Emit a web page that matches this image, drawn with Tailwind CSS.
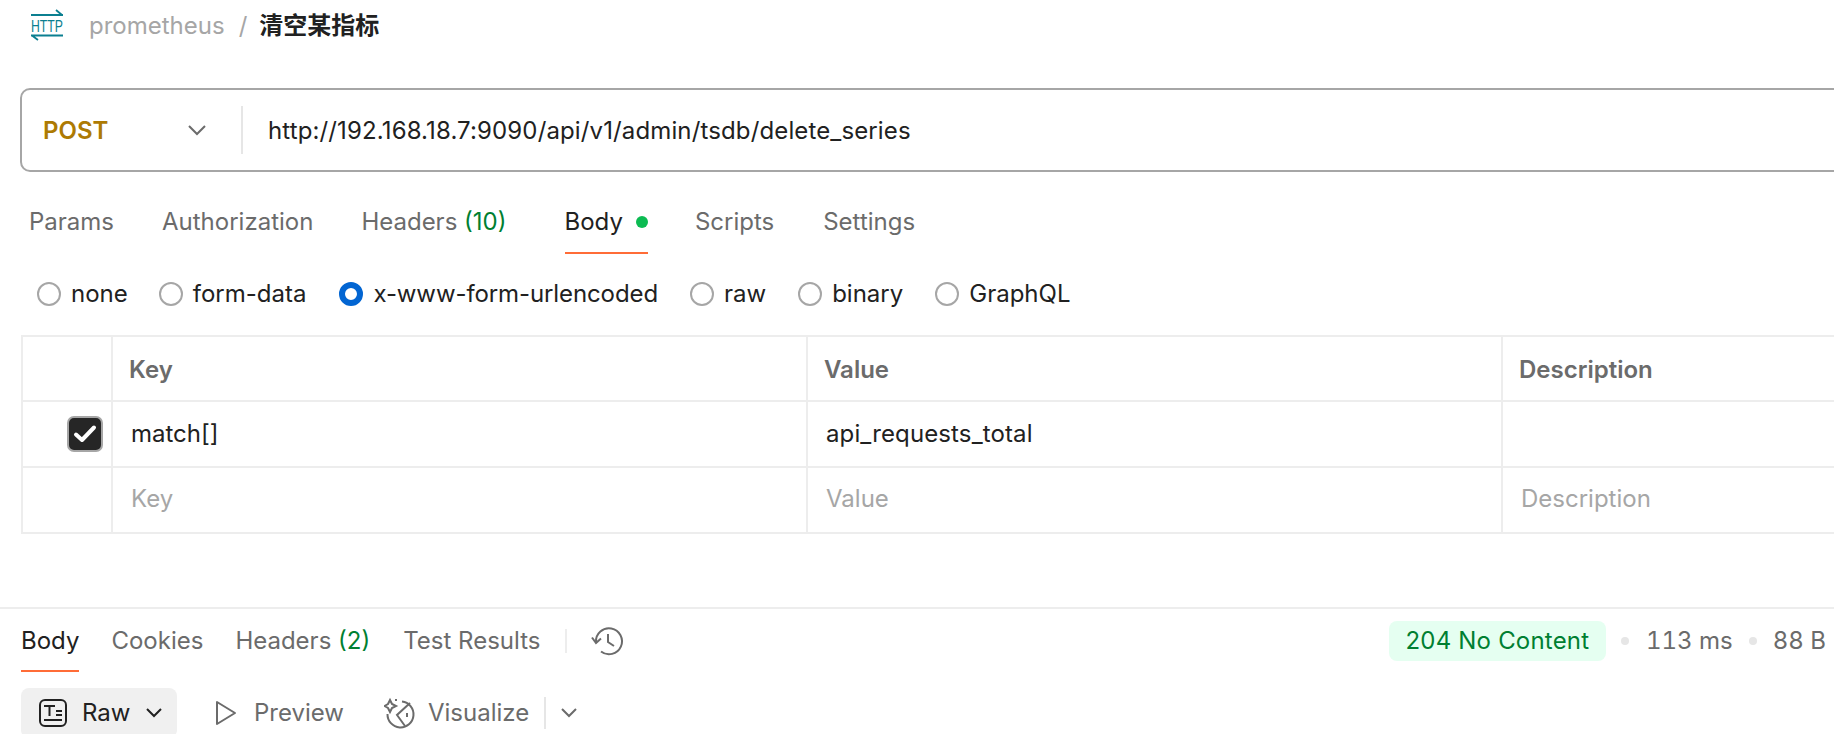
<!DOCTYPE html>
<html lang="zh">
<head>
<meta charset="utf-8">
<script src="https://cdn.jsdelivr.net/npm/@tailwindcss/browser@4"></script>
<title>清空某指标</title>
</head>
<body class="w-[1834px] h-[734px] overflow-hidden bg-white text-[24px] leading-[32px] text-[#212121] font-['Inter','Noto_Sans_CJK_SC',sans-serif]">
<div class="flex items-center h-[52px] pl-[30px]">
  <svg class="w-[34px] h-[34px] mr-[25px] overflow-visible" viewBox="0 0 34 34" fill="none" stroke="#0b7f90" stroke-width="1.8">
    <path d="M1 6H33M26 1L32 6M1 26.5H33M2 26.5L8 31"/>
    <text x="1" y="23" font-family="'Liberation Sans',sans-serif" font-size="17" fill="#0b7f90" stroke="none" textLength="32" lengthAdjust="spacingAndGlyphs">HTTP</text>
  </svg>
  <span class="text-[#a6a6a6]">prometheus</span>
  <span class="text-[#a6a6a6] ml-[14px] mr-[12px]">/</span>
  <span class="font-bold">清空某指标</span>
</div>

<div class="ml-[20px] mt-[36px] w-[1830px] h-[84px] flex items-center border-2 border-[#a6a6a6] rounded-[10px]">
  <span class="ml-[21px] w-[144px] mt-[2px] font-semibold text-[#ad7a03]">POST</span>
  <svg class="w-[20px] h-[12px] mr-[34px]" viewBox="0 0 20 12" fill="none" stroke="#6b6b6b" stroke-width="2"><path d="M2 2L10 10L18 2"/></svg>
  <span class="w-[2px] h-[48px] bg-[#e6e6e6]"></span>
  <span class="ml-[25px] mt-[1px] tracking-[0.13px]">http://192.168.18.7:9090/api/v1/admin/tsdb/delete_series</span>
</div>

<div class="flex h-[82px] ml-[29px] text-[#6b6b6b]">
  <div class="mr-[48px] pt-[34px]">Params</div>
  <div class="mr-[48px] pt-[34px]">Authorization</div>
  <div class="mr-[58px] pt-[34px]">Headers <span class="text-[#007f31]">(10)</span></div>
  <div class="mr-[47px] pt-[34px] h-[82px] border-b-2 border-[#ff6c37] text-[#212121] flex items-start">Body<span class="w-[12px] h-[12px] rounded-full bg-[#0cbb52] ml-[13px] mt-[10px]"></span></div>
  <div class="mr-[49px] pt-[34px]">Scripts</div>
  <div class="pt-[34px]">Settings</div>
</div>

<div class="flex items-center h-[48px] mt-[16px] ml-[37px]">
  <span class="w-[24px] h-[24px] rounded-full border-2 border-[#a6a6a6] mr-[10px]"></span><span class="mr-[31px]">none</span>
  <span class="w-[24px] h-[24px] rounded-full border-2 border-[#a6a6a6] mr-[10px]"></span><span class="mr-[33px]">form-data</span>
  <span class="w-[24px] h-[24px] rounded-full border-[6px] border-[#0265d2] mr-[10px]"></span><span class="mr-[32px] tracking-[-0.1px]">x-www-form-urlencoded</span>
  <span class="w-[24px] h-[24px] rounded-full border-2 border-[#a6a6a6] mr-[10px]"></span><span class="mr-[32px]">raw</span>
  <span class="w-[24px] h-[24px] rounded-full border-2 border-[#a6a6a6] mr-[10px]"></span><span class="mr-[32px]">binary</span>
  <span class="w-[24px] h-[24px] rounded-full border-2 border-[#a6a6a6] mr-[10px]"></span><span>GraphQL</span>
</div>

<div class="ml-[21px] mt-[17px] w-[1813px] border-2 border-r-0 border-[#ededed] grid grid-cols-[90px_695px_695px_1fr] grid-rows-[65px_66px_64px]">
  <div class="border-r-2 border-b-2 border-[#ededed]"></div>
  <div class="border-r-2 border-b-2 border-[#ededed] pl-[16px] pt-[2px] flex items-center font-semibold text-[#6b6b6b]">Key</div>
  <div class="border-r-2 border-b-2 border-[#ededed] pl-[16px] pt-[2px] flex items-center font-semibold text-[#6b6b6b]">Value</div>
  <div class="border-b-2 border-[#ededed] pl-[16px] pt-[2px] flex items-center font-semibold text-[#6b6b6b]">Description</div>

  <div class="border-r-2 border-b-2 border-[#ededed] flex items-center justify-end pr-[8px]">
    <span class="w-[36px] h-[36px] rounded-[7px] bg-[#262626] border-2 border-[#a6a6a6] flex items-center justify-center">
      <svg class="w-[24px] h-[20px]" viewBox="0 0 24 20" fill="none" stroke="#fff" stroke-width="4" stroke-linecap="round" stroke-linejoin="round"><path d="M3 10.5L9 16L21 3.5"/></svg>
    </span>
  </div>
  <div class="border-r-2 border-b-2 border-[#ededed] pl-[18px] flex items-center">match[]</div>
  <div class="border-r-2 border-b-2 border-[#ededed] pl-[18px] flex items-center tracking-[0.12px]">api_requests_total</div>
  <div class="border-b-2 border-[#ededed]"></div>

  <div class="border-r-2 border-[#ededed]"></div>
  <div class="border-r-2 border-[#ededed] pl-[18px] pb-[2px] flex items-center text-[#a6a6a6]">Key</div>
  <div class="border-r-2 border-[#ededed] pl-[18px] pb-[2px] flex items-center text-[#a6a6a6]">Value</div>
  <div class="pl-[18px] pb-[2px] flex items-center text-[#a6a6a6]">Description</div>
</div>

<div class="mt-[73px] border-t-2 border-[#ededed] flex justify-between h-[65px] pl-[21px]">
  <div class="flex text-[#6b6b6b]">
    <div class="mr-[32px] pt-[16px] h-[63px] border-b-2 border-[#ff6c37] text-[#212121]">Body</div>
    <div class="mr-[32px] pt-[16px]">Cookies</div>
    <div class="mr-[33px] pt-[16px]">Headers <span class="text-[#007f31]">(2)</span></div>
    <div class="pt-[16px]">Test Results</div>
    <span class="w-[2px] h-[24px] bg-[#ededed] ml-[24px] mt-[20px]"></span>
    <svg class="w-[34px] h-[34px] ml-[24px] mt-[15px]" viewBox="0 0 34 34" fill="none" stroke="#6b6b6b" stroke-width="2"><path d="M5 18A13 13 0 1 1 10 27.5"/><path d="M1 13.5L5 19L10 14.5"/><path d="M17 10V18L23 22"/></svg>
  </div>
  <div class="flex items-start pt-[12px] pr-[8px] text-[#6b6b6b]">
    <span class="h-[40px] w-[217px] rounded-[8px] bg-[#e5fff1] text-[#007f31] tracking-[0.2px] flex items-center justify-center">204 No Content</span>
    <span class="w-[8px] h-[8px] rounded-full bg-[#e6e6e6] ml-[15px] mr-[17px] mt-[16px]"></span>
    <span class="mt-[4px] tabular-nums">113 ms</span>
    <span class="w-[8px] h-[8px] rounded-full bg-[#e6e6e6] mx-[16px] mt-[16px]"></span>
    <span class="mt-[4px] tabular-nums">88 B</span>
  </div>
</div>

<div class="flex items-center h-[50px] mt-[16px] ml-[21px] text-[#6b6b6b]">
  <div class="w-[156px] h-[50px] rounded-[8px] bg-[#f0f0f0] text-[#212121] flex items-center pl-[18px]">
    <svg class="w-[28px] h-[28px] mr-[15px]" viewBox="0 0 28 28" fill="none" stroke="#212121" stroke-width="2"><rect x="1" y="1" width="26" height="26" rx="5"/><path d="M5 7H16M10.5 7V17M5 21H23M17 12H23M17 16H23"/></svg>
    Raw
    <svg class="w-[18px] h-[12px] ml-[15px]" viewBox="0 0 18 12" fill="none" stroke="#212121" stroke-width="2"><path d="M2 2L9 9L16 2"/></svg>
  </div>
  <svg class="w-[22px] h-[26px] ml-[38px] mr-[17px]" viewBox="0 0 22 26" fill="none" stroke="#6b6b6b" stroke-width="2" stroke-linejoin="round"><path d="M2 2V24L20 13Z"/></svg>
  <span>Preview</span>
  <svg class="w-[32px] h-[32px] ml-[40px] mr-[12px]" viewBox="0 0 32 32" fill="none" stroke="#6b6b6b" stroke-width="2"><path d="M18 4.5A13 13 0 1 1 3.5 17"/><path d="M26 6L13 18L21 29M23 16V20"/><path d="M6 3L8 7L12 9L8 11L6 15L4 11L0.5 9L4 7Z"/><path d="M12 2V4"/></svg>
  <span>Visualize</span>
  <span class="w-[2px] h-[32px] bg-[#e6e6e6] ml-[15px]"></span>
  <svg class="w-[18px] h-[12px] ml-[14px]" viewBox="0 0 18 12" fill="none" stroke="#6b6b6b" stroke-width="2"><path d="M2 2L9 9L16 2"/></svg>
</div>
</body>
</html>
